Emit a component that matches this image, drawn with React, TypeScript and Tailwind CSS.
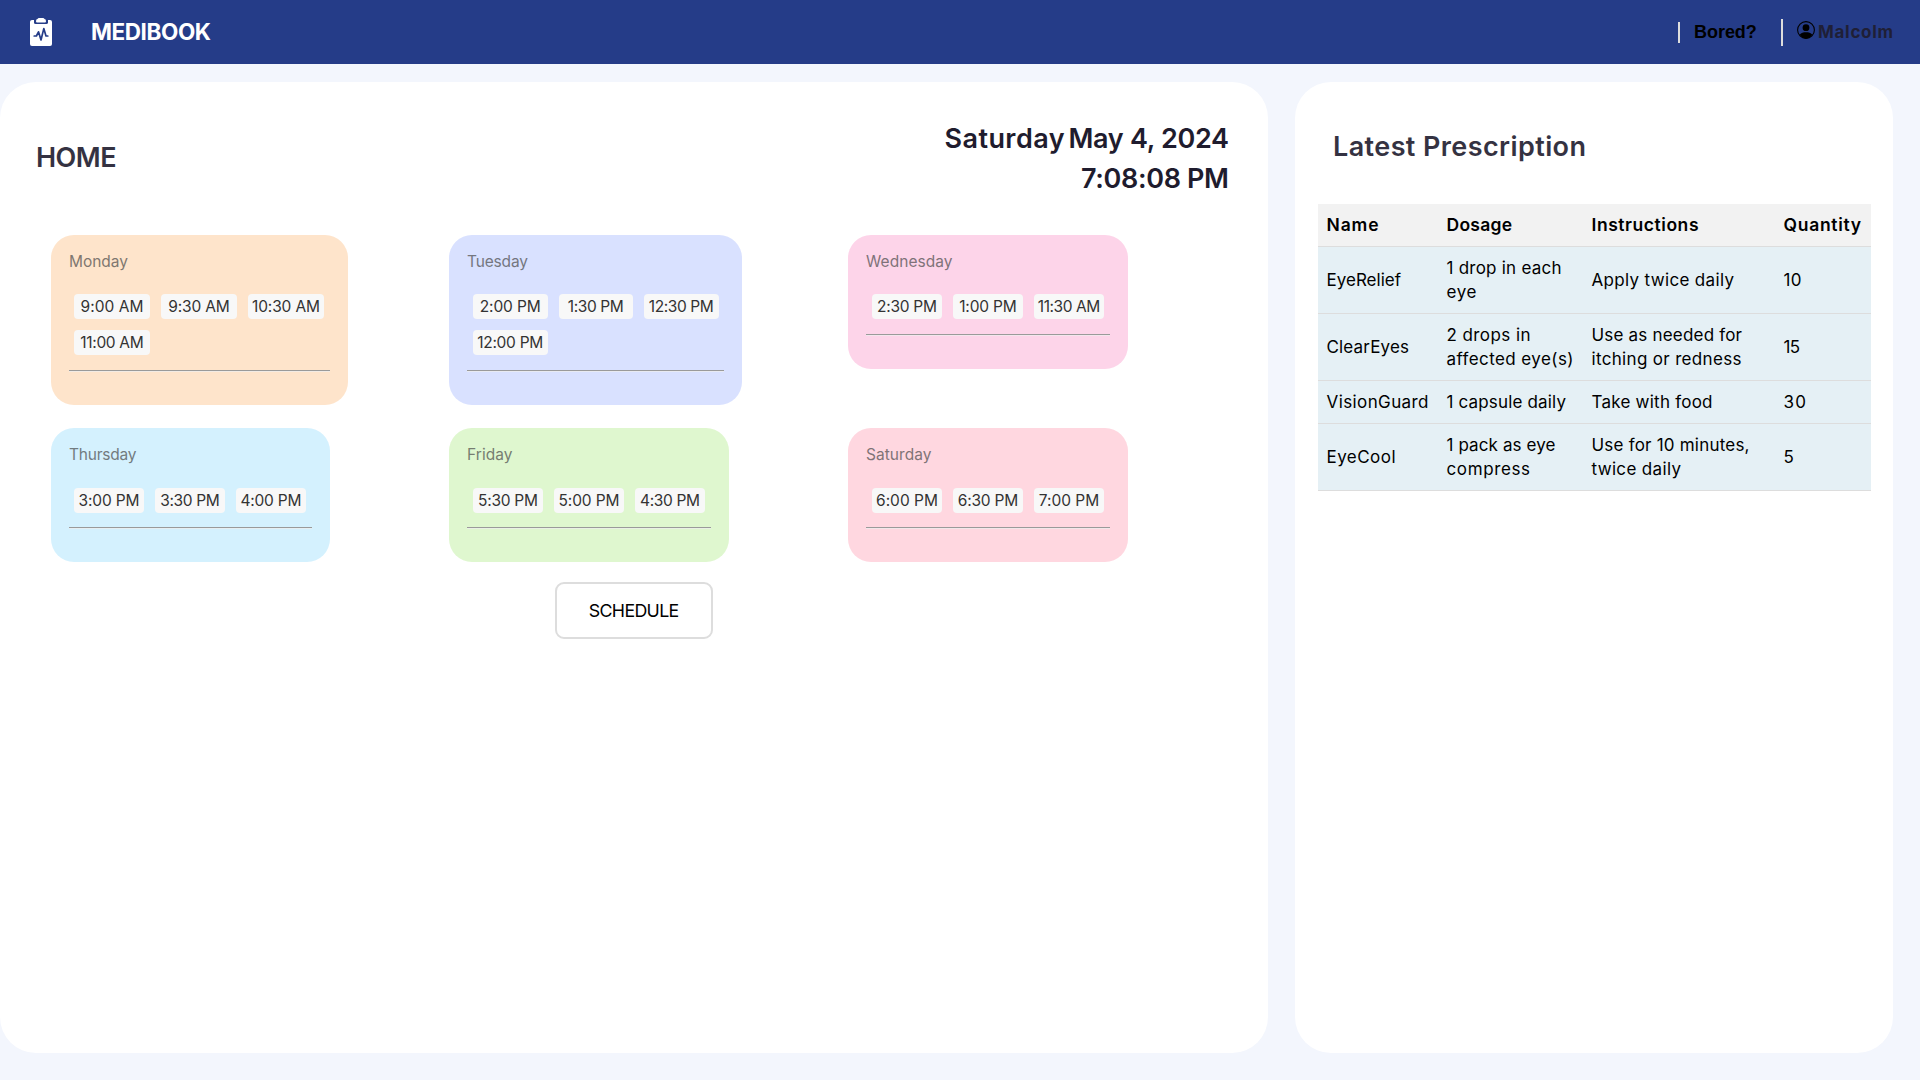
import { useLayoutEffect, useRef, useState } from 'react';
import type { CSSProperties } from 'react';

/** One line of text whose letter spacing is adjusted so that it fills `w` pixels. */
function Fit({ text, w, className = '' }: { text: string; w: number; className?: string }) {
  const ref = useRef<HTMLSpanElement>(null);
  const [spacing, setSpacing] = useState(0);
  useLayoutEffect(() => {
    const natural = ref.current!.getBoundingClientRect().width;
    setSpacing((w - natural) / Math.max(1, text.length - 1));
  }, [text, w]);
  const style: CSSProperties = { letterSpacing: spacing, marginRight: -spacing };
  return (
    <span ref={ref} style={style} className={`inline-block whitespace-nowrap ${className}`}>
      {text}
    </span>
  );
}

type Line = [string, number];

interface Day {
  name: Line;
  color: string;
  width: string;
  chip: string;
  gap: string;
  top: string;
  slots: Line[];
}

const days: Day[] = [
  { name: ['Monday', 59], color: 'bg-[#fee4cb]', width: 'w-[297px]', chip: 'w-[76px]', gap: 'pl-[5px]', top: 'mt-[14px] mb-[15px]', slots: [['9:00 AM', 63], ['9:30 AM', 61.5], ['10:30 AM', 68], ['11:00 AM', 63.5]] },
  { name: ['Tuesday', 61], color: 'bg-[#d9e1ff]', width: 'w-[293px]', chip: 'w-[74.5px]', gap: 'pl-[6px]', top: 'mt-[14px] mb-[15px]', slots: [['2:00 PM', 61], ['1:30 PM', 56], ['12:30 PM', 65], ['12:00 PM', 66]] },
  { name: ['Wednesday', 86.5], color: 'bg-[#fdd4e9]', width: 'w-[280px]', chip: 'w-[70px]', gap: 'pl-[6px]', top: 'mt-[14px] mb-[15px]', slots: [['2:30 PM', 60], ['1:00 PM', 57.5], ['11:30 AM', 62.5]] },
  { name: ['Thursday', 67.5], color: 'bg-[#d4f1fe]', width: 'w-[279px]', chip: 'w-[70px]', gap: 'pl-[5px]', top: 'mt-[15px] mb-[14px]', slots: [['3:00 PM', 61], ['3:30 PM', 59.5], ['4:00 PM', 61]] },
  { name: ['Friday', 45.5], color: 'bg-[#dff7cf]', width: 'w-[280px]', chip: 'w-[70px]', gap: 'pl-[6px]', top: 'mt-[15px] mb-[14px]', slots: [['5:30 PM', 60], ['5:00 PM', 61], ['4:30 PM', 60]] },
  { name: ['Saturday', 65.5], color: 'bg-[#ffd7e0]', width: 'w-[280px]', chip: 'w-[70px]', gap: 'pl-[6px]', top: 'mt-[15px] mb-[14px]', slots: [['6:00 PM', 62], ['6:30 PM', 60.5], ['7:00 PM', 60.5]] },
];

const headings: Line[] = [['Name', 52], ['Dosage', 65.5], ['Instructions', 107], ['Quantity', 77.5]];

const rows: Line[][][] = [
  [[['EyeRelief', 74.5]], [['1 drop in each', 115], ['eye', 30]], [['Apply twice daily', 142.5]], [['10', 18]]],
  [[['ClearEyes', 82.5]], [['2 drops in', 84], ['affected eye(s)', 127]], [['Use as needed for', 150.5], ['itching or redness', 150]], [['15', 16.5]]],
  [[['VisionGuard', 102]], [['1 capsule daily', 119.5]], [['Take with food', 121]], [['30', 22.5]]],
  [[['EyeCool', 69]], [['1 pack as eye', 109], ['compress', 83.5]], [['Use for 10 minutes,', 158], ['twice daily', 89.5]], [['5', 11]]],
];

function ClipboardIcon() {
  return (
    <svg className="h-7 w-[22px]" viewBox="0 0 22 28">
      <path d="M2 2H20a2 2 0 0 1 2 2V26a2 2 0 0 1-2 2H2a2 2 0 0 1-2-2V4a2 2 0 0 1 2-2Z" fill="#fff" />
      <path d="M4 1V4.4Q4 6 5.6 6H16.4Q18 6 18 4.4V1Z" fill="#253c88" />
      <path d="M6 3.2Q6 1.2 7.5 1.1Q8 0 9 0H13Q14 0 14.5 1.1Q16 1.2 16 3.2Q16 4.4 15 4.4H7Q6 4.4 6 3.2Z" fill="#fff" />
      <path d="M4.2 18H6.4L8.5 13.8L11 22L13.8 10.6L16 18H17.8" fill="none" stroke="#253c88" strokeWidth="1.7" strokeLinejoin="round" strokeLinecap="round" />
    </svg>
  );
}

function UserIcon() {
  return (
    <svg className="h-[18px] w-[18px]" viewBox="0 0 18 18">
      <circle cx="9" cy="9" r="8.4" fill="none" stroke="#000" strokeWidth="1.1" />
      <circle cx="9" cy="6.7" r="3.4" fill="#000" />
      <path d="M2.7 13.8C4.2 11.9 6.4 11.3 9 11.3s4.8.6 6.3 2.5A8.2 8.2 0 0 1 9 17.6a8.2 8.2 0 0 1-6.3-3.8Z" fill="#000" />
    </svg>
  );
}

function DayCard({ day }: { day: Day }) {
  return (
    <div className={`rounded-[23px] px-[18px] pt-4 pb-[33px] ${day.color} ${day.width}`}>
      <div className="h-[29px] text-[15.5px] leading-[22px] text-[#4a4a4a] opacity-70">
        <Fit text={day.name[0]} w={day.name[1]} />
      </div>
      <div className={`flex flex-wrap gap-[11px] ${day.gap} ${day.top}`}>
        {day.slots.map(([text, w]) => (
          <div key={text} className={`flex h-[25px] items-center justify-center rounded-[4px] bg-[#f8f8f8] text-[15.5px] leading-[25px] text-[#333] ${day.chip}`}>
            <Fit text={text} w={w} />
          </div>
        ))}
      </div>
      <div className="h-[2px] border-t border-b border-t-[#9a9a9a] border-b-[#eeeeee]/70" />
    </div>
  );
}

export default function App() {
  return (
    <div className="flex h-[1080px] w-[1920px] flex-col overflow-hidden bg-[#f3f6fd] font-['Inter','Open_Sans',sans-serif] text-[#1f1c2e]">
      <header className="flex h-16 shrink-0 items-center bg-[#253c88] pr-[27px] pl-[30px]">
        <ClipboardIcon />
        <div className="ml-[39px] text-[22.5px] leading-8 font-bold text-white">
          <Fit text="MEDIBOOK" w={120} />
        </div>
        <div className="ml-auto flex items-center">
          <div className="h-[21px] w-[2px] bg-[#dddddd]" />
          <div className="ml-[14px] w-[87px] font-['Liberation_Sans',Arial,sans-serif] text-[18px] leading-6 font-bold text-black">
            <Fit text="Bored?" w={62.8} />
          </div>
          <div className="h-[27px] w-[2px] bg-[#dddddd]" />
          <div className="mt-[-4px] ml-[14px]">
            <UserIcon />
          </div>
          <div className="ml-[3px] w-[75px] text-[17px] leading-6 font-bold opacity-90">
            <Fit text="Malcolm" w={75} />
          </div>
        </div>
      </header>

      <main className="mt-[18px] mb-[27px] flex min-h-0 flex-1 gap-[27px]">
        <section className="w-[1268px] rounded-[36px] bg-white pt-[37px]">
          <div className="flex items-center justify-between pr-[39px] pl-[36px] text-[27px] leading-10 font-semibold">
            <h1 className="-mt-[3px] opacity-90">
              <Fit text="HOME" w={80.5} />
            </h1>
            <div className="flex flex-col items-end">
              <div className="flex gap-[4px]">
                <Fit text="Saturday" w={120} />
                <Fit text="May 4, 2024" w={160.5} />
              </div>
              <Fit text="7:08:08 PM" w={148} />
            </div>
          </div>

          <div className="mt-[36px] ml-[51px] grid grid-cols-[398px_399px_280px] items-start gap-y-[23px]">
            {days.map((day) => (
              <DayCard key={day.name[0]} day={day} />
            ))}
          </div>

          <button className="mt-5 ml-[555px] flex h-[57px] w-[158px] items-center justify-center rounded-[9px] border-2 border-[#dddddd] bg-white pt-[2px] text-[17.8px] text-black">
            <Fit text="SCHEDULE" w={90.5} />
          </button>
        </section>

        <section className="w-[598px] rounded-[36px] bg-white pt-[45px] pl-[23px]">
          <h2 className="pl-[15px] text-[27px] leading-10 font-semibold opacity-90">
            <Fit text="Latest Prescription" w={253} />
          </h2>
          <table className="mt-[37px] w-[553px] table-fixed border-separate border-spacing-0 text-left text-[17px] leading-6 text-black">
            <colgroup>
              <col className="w-[120px]" />
              <col className="w-[145px]" />
              <col className="w-[192px]" />
              <col className="w-[96px]" />
            </colgroup>
            <thead>
              <tr className="bg-[#f2f2f2]">
                {headings.map(([text, w]) => (
                  <th key={text} className="border-b border-[#dddddd] py-[9px] pl-[8.5px] text-[17.5px] font-semibold">
                    <Fit text={text} w={w} className="align-top" />
                  </th>
                ))}
              </tr>
            </thead>
            <tbody>
              {rows.map((cells) => (
                <tr key={cells[0][0][0]} className="bg-[#e5f0f5]">
                  {cells.map((lines) => (
                    <td key={lines[0][0]} className="border-b border-[#dddddd] py-[9px] pl-[8.5px] align-middle">
                      {lines.map(([text, w]) => (
                        <div key={text} className="h-6">
                          <Fit text={text} w={w} className="align-top" />
                        </div>
                      ))}
                    </td>
                  ))}
                </tr>
              ))}
            </tbody>
          </table>
        </section>
      </main>
    </div>
  );
}
